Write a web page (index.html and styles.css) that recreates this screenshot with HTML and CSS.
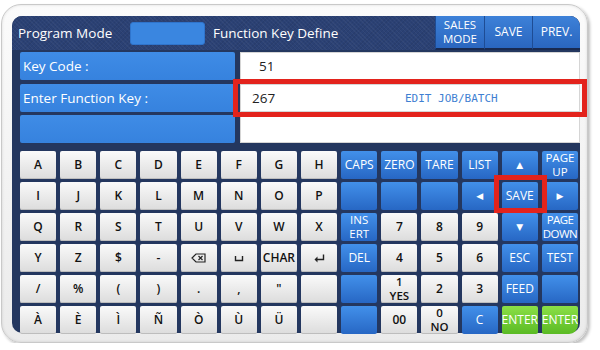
FILE: index.html
```html
<!DOCTYPE html>
<html lang="en">

<head>
    <meta charset="UTF-8">
    <meta name="viewport" content="width=device-width, initial-scale=1.0">
    <link rel="stylesheet" href="styles.css">

    <title>Function Key Define</title>
</head>

<body>

    <div class="bezel">
        <div class="screen">

            <div class="topbar">
                <span class="mode-title">Program Mode</span>
                <span class="mode-box"></span>
                <span class="page-title">Function Key Define</span>
                <div class="top-buttons">
                    <div class="top-btn two">SALES<br>MODE</div>
                    <div class="top-btn">SAVE</div>
                    <div class="top-btn last">PREV.</div>
                </div>
            </div>

            <div class="fields">
                <div class="field-row">
                    <div class="field-label">Key Code :</div>
                    <div class="field-value code">51</div>
                </div>
                <div class="field-row">
                    <div class="field-label">Enter Function Key :</div>
                    <div class="field-value selected">
                        <span class="value-num">267</span>
                        <span class="value-desc">EDIT JOB/BATCH</span>
                    </div>
                </div>
                <div class="field-row">
                    <div class="field-label"></div>
                    <div class="field-value"></div>
                </div>
            </div>

            <div class="keypad">
                <!-- row 1 -->
                <div class="key w">A</div>
                <div class="key w">B</div>
                <div class="key w">C</div>
                <div class="key w">D</div>
                <div class="key w">E</div>
                <div class="key w">F</div>
                <div class="key w">G</div>
                <div class="key w">H</div>
                <div class="key b">CAPS</div>
                <div class="key b">ZERO</div>
                <div class="key b">TARE</div>
                <div class="key b">LIST</div>
                <div class="key b arrow">&#9650;</div>
                <div class="key b two">PAGE<br>UP</div>

                <!-- row 2 -->
                <div class="key w">I</div>
                <div class="key w">J</div>
                <div class="key w">K</div>
                <div class="key w">L</div>
                <div class="key w">M</div>
                <div class="key w">N</div>
                <div class="key w">O</div>
                <div class="key w">P</div>
                <div class="key b"></div>
                <div class="key b"></div>
                <div class="key b"></div>
                <div class="key b arrow">&#9664;</div>
                <div class="key b marked">SAVE</div>
                <div class="key b arrow">&#9654;</div>

                <!-- row 3 -->
                <div class="key w">Q</div>
                <div class="key w">R</div>
                <div class="key w">S</div>
                <div class="key w">T</div>
                <div class="key w">U</div>
                <div class="key w">V</div>
                <div class="key w">W</div>
                <div class="key w">X</div>
                <div class="key b two">INS<br>ERT</div>
                <div class="key w">7</div>
                <div class="key w">8</div>
                <div class="key w">9</div>
                <div class="key b arrow">&#9660;</div>
                <div class="key b two tight">PAGE<br>DOWN</div>

                <!-- row 4 -->
                <div class="key w">Y</div>
                <div class="key w">Z</div>
                <div class="key w">$</div>
                <div class="key w">-</div>
                <div class="key w">
                    <svg width="15" height="10" viewBox="0 0 15 10">
                        <path d="M5 1 H14 V9 H5 L1 5 Z" fill="none" stroke="#222" stroke-width="1.2"/>
                        <path d="M7.5 3 L11.5 7 M11.5 3 L7.5 7" stroke="#222" stroke-width="1.2"/>
                    </svg>
                </div>
                <div class="key w">
                    <svg width="10" height="8" viewBox="0 0 10 8">
                        <path d="M1.5 2 V6.5 H8.5 V2" fill="none" stroke="#222" stroke-width="1.4"/>
                    </svg>
                </div>
                <div class="key w">CHAR</div>
                <div class="key w">
                    <svg width="11" height="9" viewBox="0 0 11 9">
                        <path d="M9.5 0.5 V5.5 H2.5" fill="none" stroke="#222" stroke-width="1.4"/>
                        <path d="M0.5 5.5 L3.5 2.5 V8.5 Z" fill="#222"/>
                    </svg>
                </div>
                <div class="key b">DEL</div>
                <div class="key w">4</div>
                <div class="key w">5</div>
                <div class="key w">6</div>
                <div class="key b">ESC</div>
                <div class="key b">TEST</div>

                <!-- row 5 -->
                <div class="key w">/</div>
                <div class="key w">%</div>
                <div class="key w">(</div>
                <div class="key w">)</div>
                <div class="key w">.</div>
                <div class="key w">,</div>
                <div class="key w">"</div>
                <div class="key w"></div>
                <div class="key b"></div>
                <div class="key w two">1<br>YES</div>
                <div class="key w">2</div>
                <div class="key w">3</div>
                <div class="key b">FEED</div>
                <div class="key b"></div>

                <!-- row 6 -->
                <div class="key w">À</div>
                <div class="key w">È</div>
                <div class="key w">Ì</div>
                <div class="key w">Ñ</div>
                <div class="key w">Ò</div>
                <div class="key w">Ù</div>
                <div class="key w">Ü</div>
                <div class="key w"></div>
                <div class="key b"></div>
                <div class="key w">00</div>
                <div class="key w two">0<br>NO</div>
                <div class="key b">C</div>
                <div class="key g">ENTER</div>
                <div class="key g corner">ENTER</div>
            </div>

        </div>
    </div>

</body>

</html>
```

FILE: styles.css
```css
* {
    box-sizing: border-box;
}

body {
    margin: 0;
    background: #fff;
    font-family: "Open Sans", "DejaVu Sans", sans-serif;
}

/* outer white frame of the terminal */
.bezel {
    width: 587px;
    height: 339px;
    margin: 4px 0 0 1px;
    padding: 11px 7px 9px 10px;
    border: 1px solid #c9c9c9;
    border-radius: 20px;
    background: linear-gradient(#fbfbfb, #ebebeb);
    box-shadow: 2px 2px 3px rgba(0, 0, 0, 0.25), inset 0 0 3px rgba(0, 0, 0, 0.12);
}

.screen {
    height: 100%;
    background-color: #24375f;
    border-radius: 10px;
}

/* header */
.topbar {
    display: flex;
    align-items: center;
    height: 34px;
    padding-left: 6px;
    border-radius: 10px 10px 0 0;
    background-color: #2b4174;
    background-image: repeating-linear-gradient(45deg, rgba(255, 255, 255, 0.04) 0 1px, transparent 1px 3px),
        repeating-linear-gradient(-45deg, rgba(0, 0, 0, 0.06) 0 1px, transparent 1px 3px);
    color: #fff;
    font-size: 13.5px;
}

.mode-title {
    width: 112px;
}

.mode-box {
    width: 75px;
    height: 23px;
    background: #3a86e0;
    border: 1px solid #2f74cc;
    border-radius: 3px;
}

.page-title {
    margin-left: 8px;
}

.top-buttons {
    display: flex;
    align-self: stretch;
    margin-left: auto;
}

.top-btn {
    display: flex;
    align-items: center;
    justify-content: center;
    width: 48px;
    border-left: 1px solid #1e4c94;
    border-bottom: 2px solid #192a50;
    background: linear-gradient(#3d81d8, #2a66bf);
    font-size: 12px;
    line-height: 14px;
    text-align: center;
}

.top-btn.two {
    width: 49px;
    font-size: 11.5px;
}

.top-btn.last {
    border-top-right-radius: 10px;
}

/* value rows */
.fields {
    padding: 2px 0 0 8px;
}

.field-row {
    display: grid;
    grid-template-columns: 215px 340px;
    column-gap: 5px;
    height: 28px;
    margin-bottom: 3px;
}

.field-row:first-child {
    margin-bottom: 4px;
}

.field-label {
    display: flex;
    align-items: center;
    padding-left: 3px;
    background: linear-gradient(#3f8ce6, #3682de);
    border-radius: 2px;
    color: #fff;
    font-size: 13.5px;
}

.field-value {
    display: flex;
    align-items: center;
    padding-left: 11px;
    background: #fff;
    border: 1px solid #d5d5d5;
    color: #222;
    font-size: 13.5px;
}

.field-value.code {
    padding-left: 18px;
}

.field-value.selected {
    position: relative;
}

.field-value.selected::after {
    content: "";
    position: absolute;
    top: -6px;
    bottom: -6px;
    left: -8px;
    right: -8px;
    border: 5px solid #e3231c;
}

.value-num {
    width: 153px;
}

.value-desc {
    color: #3f7fd2;
    font-family: "DejaVu Sans Mono", monospace;
    font-size: 11px;
}

/* keyboard */
.keypad {
    display: grid;
    grid-template-columns: repeat(14, 1fr);
    grid-template-rows: repeat(6, 28px);
    gap: 3px 4px;
    margin-top: 8px;
    padding: 0 2px 0 8px;
}

.key {
    display: flex;
    align-items: center;
    justify-content: center;
    border-radius: 2px;
    font-size: 12px;
    line-height: 14px;
    text-align: center;
    white-space: nowrap;
}

.key.two {
    font-size: 11.5px;
}

.key.w {
    background: linear-gradient(#fafafa, #dcdcdc);
    box-shadow: inset 0 -1px 0 #bdbdbd;
    color: #111;
    font-weight: 600;
}

.key.b {
    background: linear-gradient(#4290ea, #2767c4);
    color: #fff;
}

.key.g {
    overflow: hidden;
    background: linear-gradient(#8bdf46, #5bbb25);
    color: #fff;
}

.key.corner {
    border-bottom-right-radius: 9px;
}

.key.tight {
    overflow: hidden;
    letter-spacing: -0.6px;
}

.key.arrow {
    font-family: "DejaVu Sans", sans-serif;
    font-size: 9px;
}

.key.marked {
    position: relative;
}

.key.marked::after {
    content: "";
    position: absolute;
    top: -7px;
    bottom: -3px;
    left: -8px;
    right: -9px;
    border: 5px solid #e3231c;
}
```
